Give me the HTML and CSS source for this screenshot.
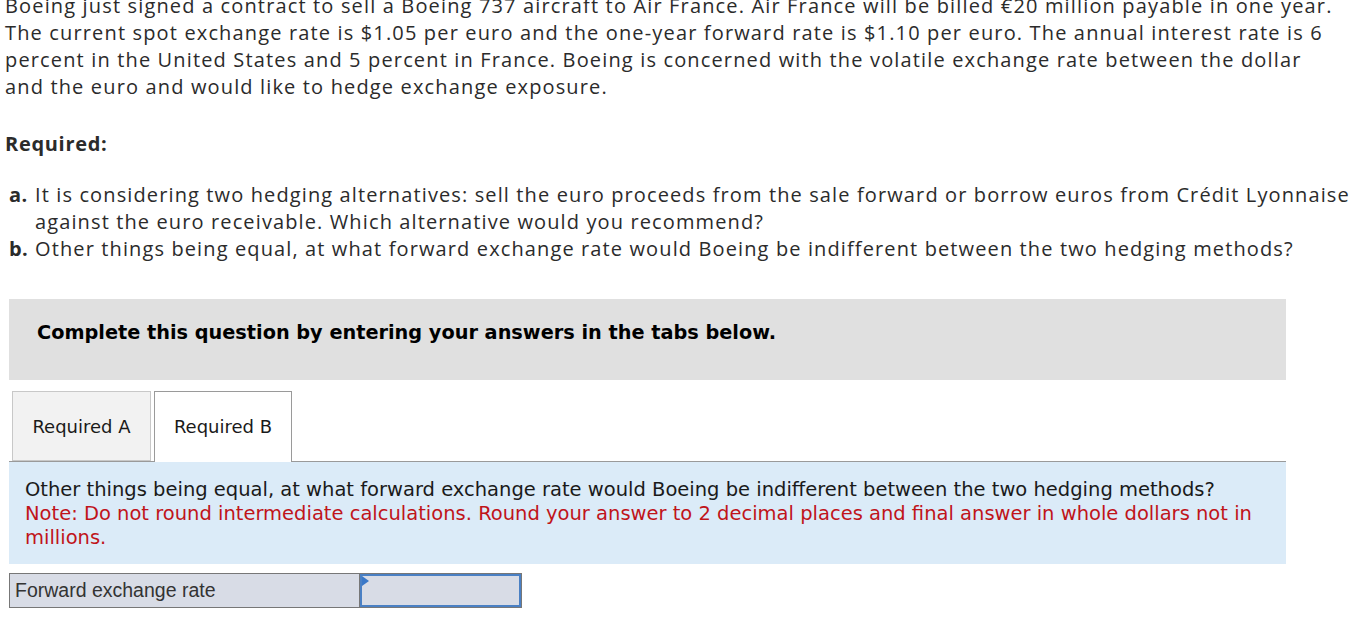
FILE: index.html
```html
<!DOCTYPE html>
<html>
<head>
<meta charset="utf-8">
<link rel="stylesheet" href="styles.css">
</head>
<body>
<div class="page">
  <p class="intro">Boeing just signed a contract to sell a Boeing 737 aircraft to Air France. Air France will be billed €20 million payable in one year.<br>The current spot exchange rate is $1.05 per euro and the one-year forward rate is $1.10 per euro. The annual interest rate is 6<br>percent in the United States and 5 percent in France. Boeing is concerned with the volatile exchange rate between the dollar<br>and the euro and would like to hedge exchange exposure.</p>
  <p class="required">Required:</p>
  <ol class="parts">
    <li><b class="lbl">a.</b><span>It is considering two hedging alternatives: sell the euro proceeds from the sale forward or borrow euros from Crédit Lyonnaise<br>against the euro receivable. Which alternative would you recommend?</span></li>
    <li><b class="lbl">b.</b><span>Other things being equal, at what forward exchange rate would Boeing be indifferent between the two hedging methods?</span></li>
  </ol>
  <div class="instr">Complete this question by entering your answers in the tabs below.</div>
  <div class="tabs">
    <div class="tab">Required A</div>
    <div class="tab active">Required B</div>
  </div>
  <div class="panel">
    <div class="q">Other things being equal, at what forward exchange rate would Boeing be indifferent between the two hedging methods?</div>
    <div class="note">Note: Do not round intermediate calculations. Round your answer to 2 decimal places and final answer in whole dollars not in<br>millions.</div>
  </div>
  <div class="answer">
    <div class="label">Forward exchange rate</div>
    <div class="input"><span class="flag"></span></div>
  </div>
</div>
</body>
</html>
```
FILE: styles.css
```css
html, body {
  margin: 0;
  padding: 0;
  background: #fff;
}
.page {
  padding-left: 9px;
  width: 1277px;
}
.intro {
  margin: -8px 0 0 -4px;
  font-family: "Open Sans", "Lato", sans-serif;
  font-size: 20px;
  letter-spacing: 1.15px;
  line-height: 27px;
  color: #2b2b2b;
  white-space: nowrap;
}
.required {
  margin: 30px 0 0 -4px;
  font-family: "Open Sans", sans-serif;
  font-weight: 700;
  font-size: 20px;
  letter-spacing: 0.7px;
  line-height: 27px;
  color: #2b2b2b;
}
.parts {
  list-style: none;
  margin: 24px 0 0 0;
  padding: 0;
  font-family: "Open Sans", sans-serif;
  font-size: 20px;
  letter-spacing: 1.12px;
  line-height: 27px;
  color: #2b2b2b;
  white-space: nowrap;
}
.parts li {
  display: flex;
}
.parts .lbl {
  width: 26px;
  flex: none;
  letter-spacing: 0.4px;
}
.instr {
  margin-top: 37px;
  height: 81px;
  box-sizing: border-box;
  background: #e0e0e0;
  padding: 22px 0 0 28px;
  font-family: "DejaVu Sans", Verdana, sans-serif;
  font-weight: 700;
  font-size: 19.3px;
  line-height: 24px;
  color: #000;
}
.tabs {
  display: flex;
  gap: 3px;
  margin-top: 11px;
  padding-left: 3px;
}
.tab {
  width: 139px;
  height: 70px;
  box-sizing: border-box;
  border: 1px solid #c8c8c8;
  background: #f2f2f2;
  display: flex;
  align-items: center;
  justify-content: center;
  font-family: "DejaVu Sans", Verdana, sans-serif;
  font-size: 18px;
  color: #1a1a1a;
}
.tab.active {
  width: 138px;
  height: 71px;
  padding-bottom: 1px;
  background: #fff;
  border-color: #9a9a9a;
  border-bottom: none;
  margin-bottom: -1px;
  position: relative;
  z-index: 1;
}
.panel {
  border-top: 1px solid #9a9a9a;
  background: #dbebf8;
  padding: 16px 16px 14px;
  font-family: "DejaVu Sans", Verdana, sans-serif;
  font-size: 19.5px;
  line-height: 24px;
  white-space: nowrap;
}
.q {
  color: #1a1a1a;
}
.note {
  color: #c0141a;
}
.answer {
  margin-top: 9px;
  display: flex;
  width: 513px;
  height: 35px;
  box-sizing: border-box;
  border: 1px solid #777;
  background: #d8dce6;
}
.label {
  width: 350px;
  box-sizing: border-box;
  border-right: 1px solid #777;
  display: flex;
  align-items: center;
  padding-left: 5px;
  font-family: "Liberation Sans", Arial, sans-serif;
  font-size: 19.5px;
  color: #333;
}
.input {
  flex: 1;
  border: 2px solid #4a80c4;
  position: relative;
}
.flag {
  position: absolute;
  left: 0;
  top: 0;
  width: 0;
  height: 0;
  border-top: 5px solid transparent;
  border-bottom: 5px solid transparent;
  border-left: 7px solid #3a78c8;
}
```
